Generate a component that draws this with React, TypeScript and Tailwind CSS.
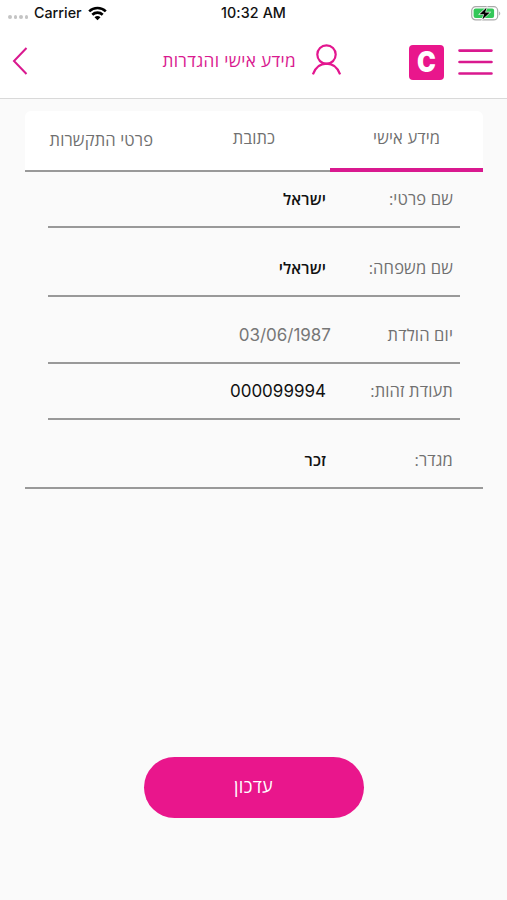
import React, { useState } from 'react';

interface Field {
  label: string;
  value: string;
  row: string;
  valueClass: string;
}

const TABS = [
  { label: 'מידע אישי', className: 'pb-[3px]' },
  { label: 'כתובת', className: 'pb-[5px]' },
  { label: 'פרטי התקשרות', className: 'pb-[2px]' },
];

const HEBREW_VALUE = 'text-[16px] tracking-[0.1px] font-semibold text-[#111]';
const NUMBER_VALUE = "pt-[2px] text-[17px] font-['Inter',sans-serif]";

const FIELDS: Field[] = [
  { label: 'שם פרטי:', value: 'ישראל', row: 'mx-[23px] pr-[7px]', valueClass: HEBREW_VALUE },
  { label: 'שם משפחה:', value: 'ישראלי', row: 'mx-[23px] pr-[7px] mt-[13px]', valueClass: HEBREW_VALUE },
  {
    label: 'יום הולדת',
    value: '03/06/1987',
    row: 'mx-[23px] pr-[7px] mt-[11px]',
    valueClass: `-mr-[5px] text-[#777] ${NUMBER_VALUE}`,
  },
  { label: 'תעודת זהות:', value: '000099994', row: 'mx-[23px] pr-[7px]', valueClass: `text-[#111] ${NUMBER_VALUE}` },
  { label: 'מגדר:', value: 'זכר', row: 'pr-[30px] mt-[13px]', valueClass: HEBREW_VALUE },
];

const StatusBar: React.FC = () => (
  <div className="grid grid-cols-3 h-[26px] items-center font-['Inter',sans-serif] text-[14.3px] font-medium text-[#111]">
    <div className="flex items-center pl-[8px]">
      <div className="flex gap-[2px] pt-[8px]">
        {[0, 1, 2, 3].map((i) => (
          <span key={i} className="w-[3.5px] h-[3.5px] rounded-full bg-[#c4c4c4]" />
        ))}
      </div>
      <span className="ml-[6px]">Carrier</span>
      <svg className="ml-[6px]" width="19" height="15" viewBox="0 0 19 15" fill="none" stroke="#000" strokeWidth="2.6">
        <path d="M1.2 5.4C5.8 .9 13.2 .9 17.8 5.4" />
        <path d="M4.3 8.7C7.2 5.9 11.8 5.9 14.7 8.7" />
        <path d="M9.5 14.2 6.5 11.2C8.2 9.6 10.8 9.6 12.5 11.2Z" fill="#000" stroke="none" />
      </svg>
    </div>
    <span className="text-center tracking-[0.1px]">10:32 AM</span>
    <div className="flex justify-end pr-[6px]">
      <svg width="30" height="15" viewBox="0 0 30 15">
        <rect x=".7" y=".7" width="26" height="13.2" rx="4" fill="#fff" stroke="#aaa" strokeWidth="1.2" />
        <rect x="2.6" y="2.6" width="20.5" height="9.4" rx="2" fill="#34c759" />
        <path d="M28.2 5.4v4c1.4-.7 1.4-3.3 0-4Z" fill="#aaa" />
        <path d="M15.6 1.4 8.6 8.2h4.4l-1.6 5.2 7.4-7h-4.6Z" fill="#000" stroke="#fff" strokeWidth="1.2" paintOrder="stroke" />
      </svg>
    </div>
  </div>
);

const Header: React.FC = () => (
  <header className="flex h-[72px] items-center pl-[12px] pr-[14px]">
    <button aria-label="חזרה">
      <svg className="mb-[3px]" width="16" height="28" viewBox="0 0 16 28" fill="none" stroke="#d9198f" strokeWidth="2">
        <path d="M14.5 1 2 14l12.5 13" />
      </svg>
    </button>
    <h1
      dir="rtl"
      className="ml-auto pb-[3px] text-[17.2px] tracking-[0.35px] leading-[24px] font-medium text-[#d9198f] whitespace-nowrap"
    >
      מידע אישי והגדרות
    </h1>
    <svg className="ml-[15px] mb-[4px]" width="32" height="32" viewBox="0 0 32 32" fill="none" stroke="#e3168f" strokeWidth="2.2">
      <circle cx="15.5" cy="10.6" r="9.2" />
      <path d="M1.9 30.4C4.4 23.2 9.2 19.6 15.5 19.6S26.6 23.2 29.1 30.4" />
    </svg>
    <div className="ml-[66px] flex w-[35px] h-[35px] items-center justify-center rounded-[4px] bg-[#e9168c] font-['Inter',sans-serif] text-[28px] leading-[35px] font-black text-white">
      <span className="scale-x-[0.9]">C</span>
    </div>
    <button className="ml-[14px]" aria-label="תפריט">
      <svg width="35" height="28" viewBox="0 0 35 28" stroke="#d9198f" strokeWidth="2.6" strokeLinecap="round">
        <path d="M1.5 2.6h32M1.5 14h32M1.5 25.5h32" />
      </svg>
    </button>
  </header>
);

export default function App() {
  const [active, setActive] = useState(0);

  return (
    <div className="w-[507px] h-[900px] overflow-hidden bg-[#fafafa] flex flex-col font-['Open_Sans','Liberation_Sans',sans-serif]">
      <div className="bg-white border-b border-[#d9d9d9]">
        <StatusBar />
        <Header />
      </div>

      <main dir="rtl" className="ml-[25px] mr-[24px] mt-[12px]">
        {/* Tabs */}
        <div className="grid grid-cols-3 h-[61px] rounded-t-[6px] bg-white">
          {TABS.map((tab, i) => (
            <button
              key={tab.label}
              onClick={() => setActive(i)}
              className="flex flex-col text-[16.5px] tracking-[0.15px] leading-[24px] text-[#707070] whitespace-nowrap"
            >
              <span className={`flex flex-1 w-full items-center justify-center ${tab.className}`}>{tab.label}</span>
              <span className={i === active ? 'w-full h-[4px] bg-[#d9198f]' : 'w-full h-[2px] bg-[#999]'} />
            </button>
          ))}
        </div>

        {/* Details */}
        {FIELDS.map((field) => (
          <div key={field.label} className={`flex h-[56px] items-center border-b-2 border-[#999] ${field.row}`}>
            <span className="w-[127px] pb-px text-[16.5px] tracking-[0.15px] leading-[24px] text-[#707070]">{field.label}</span>
            <span className={field.valueClass}>{field.value}</span>
          </div>
        ))}
      </main>

      <button
        dir="rtl"
        className="mx-auto mt-auto mb-[82px] w-[220px] h-[61px] rounded-full bg-[#e9168c] pb-[3px] text-[18px] tracking-[0.3px] font-medium text-white"
      >
        עדכון
      </button>
    </div>
  );
}
